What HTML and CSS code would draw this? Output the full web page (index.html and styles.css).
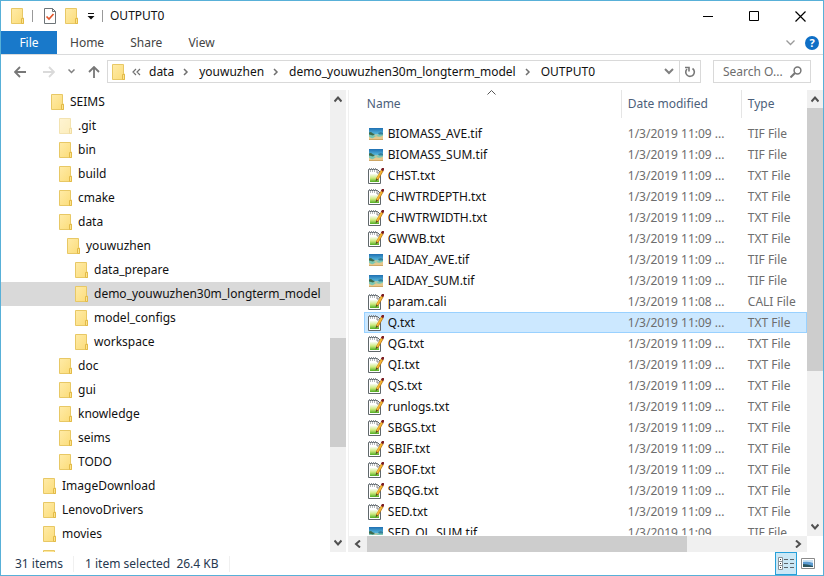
FILE: index.html
```html
<!DOCTYPE html>
<html lang="en">
<head>
    <meta charset="UTF-8">
    <meta name="viewport" content="width=device-width, initial-scale=1.0">
    <title>OUTPUT0</title>
    <link rel="stylesheet" href="styles.css">
</head>
<body>
    <!-- shared icons -->
    <svg class="sprites" aria-hidden="true">
        <defs>
            <linearGradient id="folderFill" x1="0" y1="0" x2="1" y2="1">
                <stop offset="0" stop-color="#ffeba8"/>
                <stop offset="1" stop-color="#fbdc78"/>
            </linearGradient>
            <linearGradient id="noteFill" x1="0" y1="0" x2="0" y2="1">
                <stop offset="0" stop-color="#f8fcf0"/>
                <stop offset="0.5" stop-color="#cdea80"/>
                <stop offset="1" stop-color="#4fae22"/>
            </linearGradient>
            <linearGradient id="skyFill" x1="0" y1="0" x2="0" y2="1">
                <stop offset="0" stop-color="#1f6fb2"/>
                <stop offset="1" stop-color="#5cc0e0"/>
            </linearGradient>
            <symbol id="folder" viewBox="0 0 13 16">
                <path d="M0.500 0.500h11v9.500h1v5.500h-12z" fill="url(#folderFill)" stroke="#e8c865"/>
                <path d="M10.500 15.500v-5h2v5z" fill="#fce48e" stroke="#e3ba48"/>
            </symbol>
            <symbol id="note" viewBox="0 0 16 16">
                <path d="M0.500 1.500h9l3 3v11h-12z" fill="#fff" stroke="#60676b"/>
                <path d="M2 6h9v8h-9z" fill="url(#noteFill)"/>
                <path d="M9 2v3h3" fill="#e6e6e6" stroke="#8c8c8c"/>
                <path d="M1.500 0v2M3.500 0v2M5.500 0v2M7.500 0v2" stroke="#8b9298"/>
                <path d="M2.500 2v2M4.500 2v2M6.500 2v2" stroke="#b5babd"/>
                <path d="M14.500 2L9 11.500" stroke="#b8791a" stroke-width="2.600"/>
                <path d="M14 2.500L9 11" stroke="#f7b733" stroke-width="1.600"/>
                <path d="M15.500 0L14 2.500" stroke="#7b1c22" stroke-width="2.600"/>
                <path d="M8.300 10.500L7.500 13.500l2.500-2z" fill="#5a4524"/>
            </symbol>
            <symbol id="picture" viewBox="0 0 14 12">
                <path d="M0 0h14v12h-14z" fill="#e6c88c"/>
                <path d="M0 0h14v6.500h-14z" fill="url(#skyFill)"/>
                <path d="M0 6q3-1 5 1t5-1 4 0v1.500q-3 2-5 1t-4 1-5-1z" fill="#79c7b4"/>
                <path d="M0 4.500l2-0.500 2 1.500 2 0.500-2 1.500-4-1z" fill="#3d6a4c"/>
                <path d="M9 5l3-1 2 1v1.500h-4z" fill="#347f9c"/>
                <path d="M0 11h14v1h-14z" fill="#cfa765"/>
            </symbol>
            <symbol id="crumb" viewBox="0 0 6 8">
                <path d="M1 1l3 3-3 3" fill="none" stroke="#707070" stroke-width="1.500"/>
            </symbol>
            <symbol id="up" viewBox="0 0 8 8">
                <path d="M0.500 6.500L4 2.500l3.500 4" fill="none" stroke="#505050" stroke-width="2"/>
            </symbol>
            <symbol id="down" viewBox="0 0 8 8">
                <path d="M0.500 1.500L4 5.500l3.500-4" fill="none" stroke="#505050" stroke-width="2"/>
            </symbol>
            <symbol id="left" viewBox="0 0 8 8">
                <path d="M6 0.500L2 4l4 3.500" fill="none" stroke="#505050" stroke-width="2"/>
            </symbol>
            <symbol id="right" viewBox="0 0 8 8">
                <path d="M2 0.500L6 4l-4 3.500" fill="none" stroke="#505050" stroke-width="2"/>
            </symbol>
        </defs>
    </svg>

    <div class="window">
        <header class="titlebar">
            <svg class="folder" aria-hidden="true"><use href="#folder"/></svg>
            <span class="bar"></span>
            <button class="quick" aria-label="Properties">
                <svg width="12" height="16" viewBox="0 0 12 16">
                    <path d="M0.500 0.500h8l3 3v12h-11z" fill="#fff" stroke="#6d7478"/>
                    <path d="M8.500 0.500v3h3" fill="none" stroke="#6d7478"/>
                    <path d="M2.500 8.500l2.500 2.500 4.500-5" fill="none" stroke="#e2562c" stroke-width="1.700"/>
                </svg>
            </button>
            <button class="quick" aria-label="New folder"><svg class="folder"><use href="#folder"/></svg></button>
            <button class="quick" aria-label="Customize">
                <svg width="8" height="7" viewBox="0 0 8 7"><path d="M1 0h6v1h-6zM0.500 3h7L4 6.500z" fill="#111"/></svg>
            </button>
            <span class="bar"></span>
            <h1>OUTPUT0</h1>
            <div class="controls">
                <button aria-label="Minimize"><svg width="11" height="11"><path d="M0 5.500h10" stroke="#000"/></svg></button>
                <button aria-label="Maximize"><svg width="11" height="11"><path d="M0.500 0.500h9v9h-9z" fill="none" stroke="#000"/></svg></button>
                <button aria-label="Close"><svg width="11" height="11"><path d="M0.500 0.500l10 10M10.500 0.500l-10 10" stroke="#000" stroke-width="1.200"/></svg></button>
            </div>
        </header>

        <nav class="ribbon">
            <button class="file">File</button>
            <button>Home</button>
            <button>Share</button>
            <button>View</button>
            <div class="ribbon-end">
                <button aria-label="Expand the ribbon"><svg width="9" height="6"><path d="M0.500 0.500l4 4 4-4" fill="none" stroke="#9a9a9a" stroke-width="1.300"/></svg></button>
                <button class="help" aria-label="Help">?</button>
            </div>
        </nav>

        <div class="navbar">
            <div class="arrows">
                <button aria-label="Back"><svg width="12" height="12" viewBox="0 0 12 12"><path d="M12 6H1M6 1L1 6l5 5" fill="none" stroke="#777" stroke-width="1.800"/></svg></button>
                <button aria-label="Forward"><svg width="12" height="12" viewBox="0 0 12 12"><path d="M0 6h11M6 1l5 5-5 5" fill="none" stroke="#dadada" stroke-width="1.800"/></svg></button>
                <button aria-label="Recent locations"><svg width="7" height="5" viewBox="0 0 7 5"><path d="M0.500 0.500l3 3 3-3" fill="none" stroke="#808080" stroke-width="1.500"/></svg></button>
                <button aria-label="Up"><svg width="12" height="12" viewBox="0 0 12 12"><path d="M6 12V1M1 6l5-5 5 5" fill="none" stroke="#777" stroke-width="1.800"/></svg></button>
            </div>
            <div class="address">
                <svg class="folder" aria-hidden="true"><use href="#folder"/></svg>
                <svg class="double" width="9" height="8" viewBox="0 0 9 8" aria-hidden="true"><path d="M4 1L1 4l3 3M8 1L5 4l3 3" fill="none" stroke="#707070" stroke-width="1.200"/></svg>
                <a href="#">data</a>
                <svg class="crumb" aria-hidden="true"><use href="#crumb"/></svg>
                <a href="#">youwuzhen</a>
                <svg class="crumb" aria-hidden="true"><use href="#crumb"/></svg>
                <a href="#">demo_youwuzhen30m_longterm_model</a>
                <svg class="crumb" aria-hidden="true"><use href="#crumb"/></svg>
                <a href="#">OUTPUT0</a>
                <button class="history" aria-label="Previous locations"><svg width="10" height="7" viewBox="0 0 10 7"><path d="M1 1l4 4 4-4" fill="none" stroke="#808080" stroke-width="2"/></svg></button>
                <button class="refresh" aria-label="Refresh"><svg width="12" height="12" viewBox="0 0 12 12"><path d="M8.500 2.500A4.300 4.300 0 1 1 3 3" fill="none" stroke="#777" stroke-width="1.600"/><path d="M1 1.500h4v4" fill="none" stroke="#777" stroke-width="1.600"/></svg></button>
            </div>
            <label class="search">
                <input type="text" placeholder="Search O..." aria-label="Search OUTPUT0">
                <svg width="12" height="12" viewBox="0 0 12 12" aria-hidden="true"><circle cx="7.500" cy="4.500" r="3.400" fill="none" stroke="#777" stroke-width="1.500"/><path d="M5 7L0.500 11.500" stroke="#777" stroke-width="2"/></svg>
            </label>
        </div>

        <main class="panes">
            <aside class="tree">
                <ul>
                    <li class="level-2"><svg class="folder"><use href="#folder"/></svg>SEIMS</li>
                    <li class="level-3 hidden-folder"><svg class="folder"><use href="#folder"/></svg>.git</li>
                    <li class="level-3"><svg class="folder"><use href="#folder"/></svg>bin</li>
                    <li class="level-3"><svg class="folder"><use href="#folder"/></svg>build</li>
                    <li class="level-3"><svg class="folder"><use href="#folder"/></svg>cmake</li>
                    <li class="level-3"><svg class="folder"><use href="#folder"/></svg>data</li>
                    <li class="level-4"><svg class="folder"><use href="#folder"/></svg>youwuzhen</li>
                    <li class="level-5"><svg class="folder"><use href="#folder"/></svg>data_prepare</li>
                    <li class="level-5 selected"><svg class="folder"><use href="#folder"/></svg>demo_youwuzhen30m_longterm_model</li>
                    <li class="level-5"><svg class="folder"><use href="#folder"/></svg>model_configs</li>
                    <li class="level-5"><svg class="folder"><use href="#folder"/></svg>workspace</li>
                    <li class="level-3"><svg class="folder"><use href="#folder"/></svg>doc</li>
                    <li class="level-3"><svg class="folder"><use href="#folder"/></svg>gui</li>
                    <li class="level-3"><svg class="folder"><use href="#folder"/></svg>knowledge</li>
                    <li class="level-3"><svg class="folder"><use href="#folder"/></svg>seims</li>
                    <li class="level-3"><svg class="folder"><use href="#folder"/></svg>TODO</li>
                    <li class="level-1"><svg class="folder"><use href="#folder"/></svg>ImageDownload</li>
                    <li class="level-1"><svg class="folder"><use href="#folder"/></svg>LenovoDrivers</li>
                    <li class="level-1"><svg class="folder"><use href="#folder"/></svg>movies</li>
                    <li class="level-1"><svg class="folder"><use href="#folder"/></svg></li>
                </ul>
            </aside>
            <div class="scroll vertical tree-scroll">
                <svg><use href="#up"/></svg>
                <div class="track"><div class="before"></div><div class="thumb"></div><div class="after"></div></div>
                <svg><use href="#down"/></svg>
            </div>

            <section class="files">
                <div class="list">
                    <table>
                        <thead>
                            <tr>
                                <th class="name"><span>Name</span><svg class="sort" width="9" height="5" aria-hidden="true"><path d="M0.500 4.500l4-4 4 4" fill="none" stroke="#555"/></svg></th>
                                <th class="date"><span>Date modified</span></th>
                                <th><span>Type</span></th>
                            </tr>
                        </thead>
                        <tbody>
                            <tr><td><svg class="picture"><use href="#picture"/></svg>BIOMASS_AVE.tif</td><td>1/3/2019 11:09 ...</td><td>TIF File</td></tr>
                            <tr><td><svg class="picture"><use href="#picture"/></svg>BIOMASS_SUM.tif</td><td>1/3/2019 11:09 ...</td><td>TIF File</td></tr>
                            <tr><td><svg class="note"><use href="#note"/></svg>CHST.txt</td><td>1/3/2019 11:09 ...</td><td>TXT File</td></tr>
                            <tr><td><svg class="note"><use href="#note"/></svg>CHWTRDEPTH.txt</td><td>1/3/2019 11:09 ...</td><td>TXT File</td></tr>
                            <tr><td><svg class="note"><use href="#note"/></svg>CHWTRWIDTH.txt</td><td>1/3/2019 11:09 ...</td><td>TXT File</td></tr>
                            <tr><td><svg class="note"><use href="#note"/></svg>GWWB.txt</td><td>1/3/2019 11:09 ...</td><td>TXT File</td></tr>
                            <tr><td><svg class="picture"><use href="#picture"/></svg>LAIDAY_AVE.tif</td><td>1/3/2019 11:09 ...</td><td>TIF File</td></tr>
                            <tr><td><svg class="picture"><use href="#picture"/></svg>LAIDAY_SUM.tif</td><td>1/3/2019 11:09 ...</td><td>TIF File</td></tr>
                            <tr><td><svg class="note"><use href="#note"/></svg>param.cali</td><td>1/3/2019 11:08 ...</td><td>CALI File</td></tr>
                            <tr class="selected"><td><svg class="note"><use href="#note"/></svg>Q.txt</td><td>1/3/2019 11:09 ...</td><td>TXT File</td></tr>
                            <tr><td><svg class="note"><use href="#note"/></svg>QG.txt</td><td>1/3/2019 11:09 ...</td><td>TXT File</td></tr>
                            <tr><td><svg class="note"><use href="#note"/></svg>QI.txt</td><td>1/3/2019 11:09 ...</td><td>TXT File</td></tr>
                            <tr><td><svg class="note"><use href="#note"/></svg>QS.txt</td><td>1/3/2019 11:09 ...</td><td>TXT File</td></tr>
                            <tr><td><svg class="note"><use href="#note"/></svg>runlogs.txt</td><td>1/3/2019 11:09 ...</td><td>TXT File</td></tr>
                            <tr><td><svg class="note"><use href="#note"/></svg>SBGS.txt</td><td>1/3/2019 11:09 ...</td><td>TXT File</td></tr>
                            <tr><td><svg class="note"><use href="#note"/></svg>SBIF.txt</td><td>1/3/2019 11:09 ...</td><td>TXT File</td></tr>
                            <tr><td><svg class="note"><use href="#note"/></svg>SBOF.txt</td><td>1/3/2019 11:09 ...</td><td>TXT File</td></tr>
                            <tr><td><svg class="note"><use href="#note"/></svg>SBQG.txt</td><td>1/3/2019 11:09 ...</td><td>TXT File</td></tr>
                            <tr><td><svg class="note"><use href="#note"/></svg>SED.txt</td><td>1/3/2019 11:09 ...</td><td>TXT File</td></tr>
                            <tr><td><svg class="picture"><use href="#picture"/></svg>SED_OL_SUM.tif</td><td>1/3/2019 11:09 ...</td><td>TIF File</td></tr>
                        </tbody>
                    </table>
                </div>
                <div class="scroll vertical list-scroll">
                    <svg><use href="#up"/></svg>
                    <div class="track"><div class="thumb"></div><div class="after"></div></div>
                    <svg><use href="#down"/></svg>
                </div>
                <div class="scroll horizontal">
                    <svg><use href="#left"/></svg>
                    <div class="track"><div class="thumb"></div><div class="after"></div></div>
                    <svg><use href="#right"/></svg>
                </div>
            </section>
        </main>

        <footer class="status">
            <span class="count">31 items</span>
            <span class="chosen">1 item selected&nbsp; 26.4 KB</span>
            <div class="views">
                <button class="active" aria-label="Details view">
                    <svg width="17" height="13" viewBox="0 0 17 13"><path d="M0.500 0.500h4v12h-4zM0.500 4.500h4M0.500 8.500h4" fill="#fff" stroke="#8a9298"/><path d="M2 2.500h1M2 6.500h1M2 10.500h1" stroke="#333"/><path d="M6 2.500h4M12 2.500h4M6 6.500h4M12 6.500h4M6 10.500h4M12 10.500h4" stroke="#5d666c"/></svg>
                </button>
                <button aria-label="Large icons view">
                    <svg width="14" height="11" viewBox="0 0 14 11"><path d="M0.500 0.500h13v10h-13z" fill="#fff" stroke="#8a8a8a"/><path d="M2 2h10v7h-10z" fill="#5b9bd2"/><path d="M2 4q5-1 10 1V2H2z" fill="#c9e2f3"/><path d="M2 6q4 0 10 2v1H2z" fill="#2b5560"/></svg>
                </button>
            </div>
        </footer>
    </div>
</body>
</html>
```
FILE: styles.css
```css
* {
    box-sizing: border-box;
}
body {
    margin: 0;
    font-family: "Noto Sans", "Open Sans", sans-serif;
    font-size: 12px;
    line-height: 16px;
    color: #111;
    background-color: #fff;
}
button {
    display: flex;
    align-items: center;
    justify-content: center;
    padding: 0;
    border: none;
    background: none;
    font: inherit;
    color: inherit;
}
a {
    color: inherit;
    text-decoration: none;
}
svg {
    display: block;
    flex: none;
}
.sprites {
    position: absolute;
    width: 0;
    height: 0;
}
.folder {
    width: 13px;
    height: 16px;
}
.window {
    display: flex;
    flex-direction: column;
    height: 100vh;
    border: 1px solid #58b0d8;
}

/* title bar */
.titlebar {
    display: flex;
    align-items: center;
    height: 30px;
    padding-left: 10px;
    flex: none;
}
.bar {
    width: 1px;
    height: 12px;
    margin: 0 11px 0 8px;
    background-color: #999;
}
.quick + .quick {
    margin-left: 9px;
}
.quick + .bar {
    margin: 0 7px;
}
h1 {
    margin: 0;
    font-size: 12px;
    font-weight: normal;
}
.controls {
    display: flex;
    margin-left: auto;
    height: 100%;
}
.controls button {
    width: 46px;
}

/* ribbon tabs */
.ribbon {
    display: flex;
    height: 24px;
    flex: none;
    border-bottom: 1px solid #dadbdc;
    color: #444;
}
.ribbon button {
    padding: 0 13px;
}
.ribbon .file {
    width: 56px;
    color: #fff;
    background-color: #1979ca;
}
.ribbon-end {
    display: flex;
    align-items: center;
    gap: 10px;
    margin-left: auto;
    padding-right: 4px;
}
.ribbon-end button {
    padding: 0;
}
.ribbon .help {
    width: 14px;
    height: 14px;
    border-radius: 50%;
    font-size: 11px;
    font-weight: bold;
    color: #fff;
    background-color: #0f6fc6;
}

/* address row */
.navbar {
    display: flex;
    height: 35px;
    padding: 5px 12px 7px 13px;
    flex: none;
}
.arrows {
    display: flex;
    align-items: center;
    gap: 17px;
    width: 93px;
}
.arrows button:nth-child(n+3) {
    margin-left: -4px;
}
.address {
    display: flex;
    align-items: center;
    flex: 1;
    min-width: 0;
    padding-left: 4px;
    border: 1px solid #d9d9d9;
    white-space: nowrap;
}
.double {
    margin: 0 8px 0 7px;
}
.crumb {
    width: 6px;
    height: 8px;
    margin: 0 10px 0 9px;
}
.history {
    width: 20px;
    height: 100%;
    margin-left: auto;
}
.refresh {
    width: 21px;
    height: 100%;
    border-left: 1px solid #d9d9d9;
}
.search {
    display: flex;
    align-items: center;
    width: 98px;
    margin-left: 12px;
    padding: 0 8px 0 9px;
    border: 1px solid #d9d9d9;
}
.search input {
    flex: 1;
    min-width: 0;
    padding: 0;
    border: none;
    outline: none;
    font: inherit;
}
.search input::placeholder {
    color: #6d6d6d;
}

/* panes */
.panes {
    display: flex;
    flex: 1;
    min-height: 0;
}
.tree {
    width: 40%;
    overflow: hidden;
}
.tree ul {
    margin: 0;
    padding: 0;
    list-style: none;
}
.tree li {
    display: flex;
    align-items: center;
    gap: 6px;
    height: 24px;
    white-space: nowrap;
}
.level-1 {
    padding-left: 42px;
}
.level-2 {
    padding-left: 50px;
}
.level-3 {
    padding-left: 58px;
}
.level-4 {
    padding-left: 66px;
}
.level-5 {
    padding-left: 74px;
}
.hidden-folder .folder {
    opacity: 0.5;
}
.tree .selected {
    background-color: #d9d9d9;
}
.files {
    display: grid;
    grid-template-columns: 1fr 16px;
    grid-template-rows: 1fr 16px;
    flex: 1;
    min-width: 0;
    margin-left: 2px;
    border-left: 1px solid #f0f0f0;
}
.list {
    min-width: 0;
    min-height: 0;
    margin-bottom: 1px;
    padding-left: 15px;
    overflow: hidden;
}

/* scroll bars */
.scroll {
    display: flex;
    background-color: #f0f0f0;
}
.scroll svg {
    width: 8px;
    height: 8px;
}
.vertical {
    flex-direction: column;
    align-items: center;
    gap: 5px;
    width: 16px;
    padding: 5px 0;
}
.horizontal {
    align-items: center;
    gap: 5px;
    padding: 0 5px;
}
.track {
    display: flex;
    flex: 1;
    align-self: stretch;
}
.vertical .track {
    flex-direction: column;
}
.thumb {
    background-color: #cdcdcd;
}
.tree-scroll .before {
    flex: 231;
}
.tree-scroll .thumb {
    flex: 110;
}
.tree-scroll .after {
    flex: 87;
}
.list-scroll .thumb {
    flex: 263;
}
.list-scroll .after {
    flex: 147;
}
.horizontal .thumb {
    flex: 320;
}
.horizontal .after {
    flex: 102;
}

/* file list */
table {
    width: 100%;
    border-collapse: collapse;
    table-layout: fixed;
    white-space: nowrap;
}
th {
    height: 33px;
    padding: 0;
    font-weight: normal;
    text-align: left;
    vertical-align: top;
    color: #4c607a;
}
th.name {
    position: relative;
    width: 257px;
}
th.date {
    width: 120px;
}
th span {
    display: block;
    padding: 6px 0 6px 6px;
    border-left: 1px solid #e5e5e5;
}
th.name span {
    padding-left: 3px;
    border-left: none;
}
.sort {
    position: absolute;
    top: 0;
    left: 123px;
}
td {
    height: 21px;
    padding: 0 0 0 7px;
    color: #6d6d6d;
}
td:first-child {
    display: flex;
    align-items: center;
    padding-left: 4px;
    color: #111;
}
.note {
    width: 16px;
    height: 16px;
    margin-right: 4px;
}
.picture {
    width: 14px;
    height: 12px;
    margin: 0 5px 0 1px;
}
tr.selected {
    background-color: #cce8ff;
    outline: 1px solid #99d1ff;
    outline-offset: -1px;
}

/* status bar */
.status {
    display: flex;
    align-items: center;
    height: 23px;
    padding-left: 14px;
    flex: none;
    color: #26384f;
}
.status span {
    border-right: 1px solid #f0f0f0;
}
.count {
    padding-right: 10px;
}
.chosen {
    padding: 0 10px 0 11px;
}
.views {
    display: flex;
    height: 100%;
    margin-left: auto;
    padding-right: 4px;
}
.views button {
    width: 22px;
}
.views .active {
    border: 1px solid #26a0da;
    background-color: #cbe8f6;
}
```
